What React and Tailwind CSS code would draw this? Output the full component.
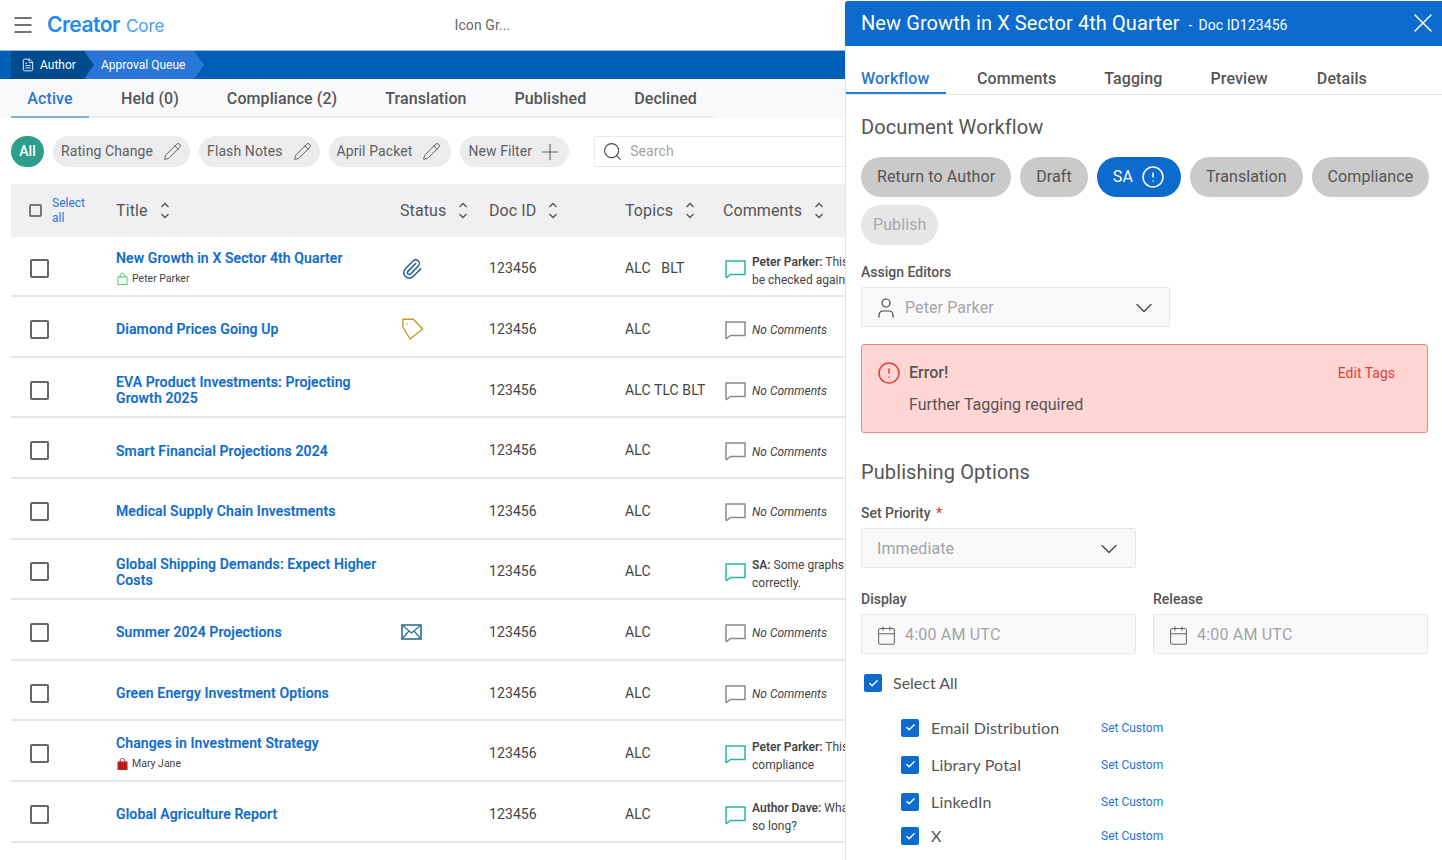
import React from "react";
import { Menu, FileText, Pencil, Plus, Search, Paperclip, X, User, ChevronDown, Calendar, Check, CircleAlert } from "lucide-react";

const Sort = () => (
  <svg width="10" height="17" viewBox="0 0 10 17" fill="none" stroke="#555" strokeWidth="1.3" className="shrink-0">
    <path d="M1.5 5 5 1.5 8.5 5M1.5 12 5 15.5 8.5 12" />
  </svg>
);

const Bubble = ({ on }) => (
  <svg width="21" height="19" viewBox="0 0 21 19" fill="none" stroke={on ? "#2bb5a0" : "#8a8a8a"} strokeWidth="1.5" className="shrink-0">
    <path d="M1 1h19v13.5H5.5L1.6 17.6 1 17z" />
  </svg>
);

const Envelope = () => (
  <svg width="21" height="16" viewBox="0 0 21 16" fill="none" stroke="#2f6f94" strokeWidth="1.6">
    <rect x="1" y="1" width="19" height="14" />
    <path d="M1 1l9.5 8L20 1M1 15l7-8M20 15l-7-8" strokeWidth="1.2" />
  </svg>
);

const PriceTag = () => (
  <svg width="22" height="22" viewBox="0 0 22 22" fill="none" stroke="#c8962b" strokeWidth="1.4" strokeLinejoin="round" className="ml-[1px]">
    <path d="M.9 1.2h10.4L20.7 11 8 21 .9 9z" />
    <circle cx="5" cy="6" r=".6" fill="#c8962b" strokeWidth=".5" />
  </svg>
);

const Bag = ({ locked }) => (
  <svg width="11" height="12" viewBox="0 0 11 12" fill={locked ? "#b91c1c" : "none"} stroke={locked ? "#b91c1c" : "#4ccb63"} strokeWidth="1" className="shrink-0">
    <rect x="1" y="4" width="9" height="7.5" />
    <path d="M3.2 4V2.2C3.2 1 4.2.5 5.5.5S7.8 1 7.8 2.2V4" fill="none" />
  </svg>
);

const BlueCheck = () => (
  <span className="w-[18px] h-[18px] rounded-[2px] bg-[#0c6bcc] flex items-center justify-center shrink-0">
    <Check size={11} color="#fff" strokeWidth={3} />
  </span>
);

const rows = [
  { title: "New Growth in X Sector 4th Quarter", owner: "Peter Parker", icon: "clip", topics: "ALC\u00a0\u00a0 BLT", who: "Peter Parker:", c1: "This", c2: "be checked again" },
  { title: "Diamond Prices Going Up", icon: "tag", topics: "ALC" },
  { title: "EVA Product Investments: Projecting Growth 2025", topics: "ALC TLC BLT" },
  { title: "Smart Financial Projections 2024", topics: "ALC" },
  { title: "Medical Supply Chain Investments", topics: "ALC" },
  { title: "Global Shipping Demands: Expect Higher Costs", topics: "ALC", who: "SA:", c1: "Some graphs", c2: "correctly." },
  { title: "Summer 2024 Projections", icon: "mail", topics: "ALC" },
  { title: "Green Energy Investment Options", topics: "ALC" },
  { title: "Changes in Investment Strategy", owner: "Mary Jane", locked: true, topics: "ALC", who: "Peter Parker:", c1: "This", c2: "compliance" },
  { title: "Global Agriculture Report", topics: "ALC", who: "Author Dave:", c1: "What", c2: "so long?" },
];

const cols = "grid grid-cols-[105px_284px_89px_136px_98px_1fr] items-center";

const Row = ({ r }) => (
  <div className={`${cols} h-[60.6px] pt-[6px] border-b-2 border-[#e6e6e8] text-[14px] text-[#444]`}>
    <span className="ml-[19px] w-[19px] h-[19px] border-2 border-[#666] rounded-[2px]" />
    <div className="pr-[10px]">
      <div className="text-[14px] leading-4 font-medium tracking-[0.12px] text-[#0c6bcc] [-webkit-text-stroke:0.2px_#0c6bcc]">{r.title}</div>
      {r.owner && (
        <div className="flex items-center gap-[4px] mt-[5px] ml-[1px] text-[10.5px] leading-4 text-[#444]">
          <Bag locked={r.locked} />
          {r.owner}
        </div>
      )}
    </div>
    <div className="pl-[1px]">
      {r.icon === "clip" && <Paperclip size={22} color="#1f5a9a" strokeWidth={1.6} />}
      {r.icon === "tag" && <PriceTag />}
      {r.icon === "mail" && <Envelope />}
    </div>
    <div className="tracking-[0.1px]">123456</div>
    <div className="tracking-[0.1px]">{r.topics}</div>
    <div className="flex items-center gap-[6px] pl-[2px] pt-[2px] w-[170px]">
      <Bubble on={!!r.who} />
      {r.who ? (
        <div className="text-[12px] leading-[18px] whitespace-nowrap pt-[3px]">
          <div><b className="font-semibold">{r.who}</b> {r.c1}</div>
          <div>{r.c2}</div>
        </div>
      ) : (
        <div className="text-[12px] italic whitespace-nowrap">No Comments</div>
      )}
    </div>
  </div>
);

const Chip = ({ label, plus, wide }) => (
  <div className={`h-[31px] shrink-0 rounded-full bg-[#ececee] flex items-center gap-[10px] pl-[8px] text-[14px] tracking-[0.1px] text-[#5f5f5f] whitespace-nowrap ${wide ? "pr-[10px]" : "pr-[8px]"}`}>
    {label}
    {plus ? <Plus size={26} strokeWidth={1} className="-ml-[5px] -mr-[2px]" /> : <Pencil size={19} strokeWidth={1.25} />}
  </div>
);

const Pill = ({ label, active, off }) => (
  <div className={`h-10 rounded-full flex items-center gap-2 text-[16px] tracking-[0.1px] ${off ? "px-3" : "px-4"} ${active ? "bg-[#0c6bcc] text-white" : off ? "bg-[#e6e6e8] text-[#a8a8a8]" : "bg-[#cacaca] text-[#555]"}`}>
    {label}
    {active && <CircleAlert size={24} strokeWidth={1.5} />}
  </div>
);

const Label = ({ children }) => <div className="text-[14px] leading-5 font-medium text-[#555]">{children}</div>;

const Time = () => (
  <div className="h-10 pt-[2px] bg-[#f9f9fb] border border-[#e8e8ea] rounded-[2px] flex items-center gap-2 pl-[14px] text-[16px] tracking-[0.2px] text-[#a4a4a4]">
    <Calendar size={21} color="#666" strokeWidth={1.2} />
    4:00 AM UTC
  </div>
);

const Channel = ({ label, h }) => (
  <div className={`flex items-center ${h} pl-[40px]`}>
    <BlueCheck />
    <span className="w-[182px] pl-[12px] text-[16px] tracking-[0.16px] text-[#555] font-['Lato',sans-serif]">{label}</span>
    <span className="text-[12px] text-[#2474d4]">Set Custom</span>
  </div>
);

export default function App() {
  return (
    <div className="w-[1442px] h-[860px] overflow-hidden flex bg-white font-['Roboto',sans-serif]">
      <div className="w-[845px] shrink-0 overflow-hidden">
        <div className="h-[50px] flex items-center">
          <Menu size={24} color="#444" strokeWidth={1.5} className="ml-[11px]" />
          <div className="ml-[12px] flex items-baseline gap-[6px] text-[#1f8af0] font-['Inter',sans-serif]">
            <span className="text-[21px] font-semibold tracking-[-0.5px]">Creator</span>
            <span className="text-[17px] text-[#4a9df2]">Core</span>
          </div>
          <span className="ml-[290px] text-[14px] tracking-[0.1px] text-[#666]">Icon Gr...</span>
        </div>
        <div className="h-[29px] bg-[#005eb4] pl-[11px] flex text-[12px] text-white border-t border-[#9cbcdc]">
          <div className="relative z-10 w-[83px] bg-[#004a8e] flex items-center gap-[5px] pl-[10px] [clip-path:polygon(0_0,73px_0,100%_50%,73px_100%,0_100%)]">
            <FileText size={14} strokeWidth={1.5} />
            Author
          </div>
          <div className="-ml-[9px] w-[119px] bg-[#2a75d8] flex items-center pl-[16px] [clip-path:polygon(0_0,109px_0,100%_50%,109px_100%,0_100%)]">
            Approval Queue
          </div>
        </div>
        <div className="h-[39px] bg-[#f9f9fb] flex text-[16px] tracking-[0.08px] font-medium text-[#555]">
          <div className="ml-[11px] w-[78px] pt-[2px] flex items-center justify-center text-[#2a75d8] border-b-2 border-[#7fb0ec]">Active</div>
          <div className="flex w-[625px] pt-[2px] border-b-2 border-[#ededf0]">
            <div className="flex items-center pl-[32px]">Held (0)</div>
            <div className="flex items-center pl-[48px]">Compliance (2)</div>
            <div className="flex items-center pl-[48px]">Translation</div>
            <div className="flex items-center pl-[48px]">Published</div>
            <div className="flex items-center pl-[48px]">Declined</div>
          </div>
        </div>
        <div className="mt-[18px] pl-[11px] flex items-center gap-[9px]">
          <div className="w-[33px] h-[31px] shrink-0 rounded-full bg-[#2e9e8c] text-white text-[14px] font-medium flex items-center justify-center">All</div>
          <Chip label="Rating Change" />
          <Chip label="Flash Notes" />
          <Chip label="April Packet" wide />
          <Chip label="New Filter" plus />
          <div className="ml-[16px] w-[300px] h-[31px] shrink-0 border border-[#e8e8ea] rounded-[2px] flex items-center gap-[7px] pl-[7px] text-[14px] tracking-[0.1px] text-[#a4a4a4]">
            <Search size={21} color="#444" strokeWidth={1.2} />
            Search
          </div>
        </div>
        <div className="mt-[17px] ml-[11px]">
          <div className={`${cols} h-[52.6px] pt-px bg-[#f0f0f2] text-[16px] tracking-[0.1px] text-[#555]`}>
            <div className="flex items-center gap-[10px] pl-[18px]">
              <span className="w-[13px] h-[13px] border-2 border-[#777] rounded-[2px] shrink-0" />
              <span className="w-[40px] text-[12px] leading-[15px] tracking-normal text-[#2a75d8]">Select all</span>
            </div>
            <div className="flex items-center gap-[12px]">Title <Sort /></div>
            <div className="flex items-center gap-[12px]">Status <Sort /></div>
            <div className="flex items-center gap-[12px]">Doc ID <Sort /></div>
            <div className="flex items-center gap-[12px]">Topics <Sort /></div>
            <div className="flex items-center gap-[12px]">Comments <Sort /></div>
          </div>
          {rows.map((r) => <Row key={r.title} r={r} />)}
        </div>
      </div>

      <div className="w-[597px] shrink-0 border-l border-[#e4e4e6]">
        <div className="-ml-px mt-px h-[45px] pb-[2px] bg-[#0c6bcc] rounded-tl-[3px] text-white flex items-center pl-[16px] pr-[3px]">
          <span className="text-[20px] tracking-[0.09px]">New Growth in X Sector 4th Quarter</span>
          <span className="ml-[9px] text-[14px] mt-[5px]">-</span>
          <span className="ml-[6px] text-[14px] tracking-[0.08px] mt-[5px]">Doc ID123456</span>
          <X size={32} strokeWidth={1.1} className="ml-auto" />
        </div>
        <div className="h-[49px] flex text-[16px] tracking-[0.1px] font-medium text-[#555] border-b border-[#e8e8ea]">
          <div className="w-[100px] pl-[15px] pt-[19px] flex items-center text-[#2a75d8] border-b-2 border-[#2a75d8]">Workflow</div>
          <div className="pl-[31px] pt-[18px] flex items-center">Comments</div>
          <div className="pl-[48px] pt-[18px] flex items-center">Tagging</div>
          <div className="pl-[48px] pt-[18px] flex items-center">Preview</div>
          <div className="pl-[49px] pt-[18px] flex items-center">Details</div>
        </div>
        <div className="pl-[15px] pr-[12px]">
          <div className="mt-[19px] text-[20px] leading-[26px] tracking-[0.1px] text-[#555]">Document Workflow</div>
          <div className="mt-[17px] flex flex-wrap gap-x-[9px] gap-y-[8px]">
            <Pill label="Return to Author" />
            <Pill label="Draft" />
            <Pill label="SA" active />
            <Pill label="Translation" />
            <Pill label="Compliance" />
            <Pill label="Publish" off />
          </div>
          <div className="mt-[17px]"><Label>Assign Editors</Label></div>
          <div className="mt-[5px] w-[309px] h-[40px] pt-[2px] bg-[#f9f9fb] border border-[#e8e8ea] rounded-[2px] flex items-center gap-[7px] pl-[12px] pr-[11px] text-[16px] tracking-[0.1px] text-[#a4a4a4]">
            <User size={24} color="#444" strokeWidth={1.2} />
            Peter Parker
            <ChevronDown size={28} color="#444" strokeWidth={1.1} className="ml-auto" />
          </div>
          <div className="mt-[17px] w-[567px] h-[89px] bg-[#ffd6d4] border border-[#f08582] rounded-[3px] pl-[15px] pr-[32px] pt-[16px]">
            <div className="flex items-center">
              <CircleAlert size={24} color="#e23d3d" strokeWidth={1.5} />
              <span className="ml-[8px] text-[16px] font-medium text-[#555]">Error!</span>
              <span className="ml-auto text-[14px] text-[#e23d3d]">Edit Tags</span>
            </div>
            <div className="mt-[8px] ml-[32px] text-[16px] text-[#555]">Further Tagging required</div>
          </div>
          <div className="mt-[26px] text-[20px] leading-[26px] tracking-[0.1px] text-[#555]">Publishing Options</div>
          <div className="mt-[18px]"><Label>Set Priority <span className="text-[#e23d3d] ml-[2px]">*</span></Label></div>
          <div className="mt-[5px] w-[275px] h-[40px] pt-[2px] bg-[#f9f9fb] border border-[#e8e8ea] rounded-[2px] flex items-center pl-[15px] pr-[12px] text-[16px] tracking-[0.1px] text-[#a4a4a4]">
            Immediate
            <ChevronDown size={28} color="#444" strokeWidth={1.1} className="ml-auto" />
          </div>
          <div className="mt-[21px] grid grid-cols-[275px_275px] gap-x-[17px]">
            <div><Label>Display</Label><div className="mt-[5px]"><Time /></div></div>
            <div><Label>Release</Label><div className="mt-[5px]"><Time /></div></div>
          </div>
          <div className="mt-[18px] flex items-center pl-[3px] h-[22px]">
            <BlueCheck />
            <span className="ml-[11px] text-[16px] text-[#555] font-['Lato',sans-serif]">Select All</span>
          </div>
          <div className="mt-[15px]">
            <Channel label="Email Distribution" h="h-[37px]" />
            <Channel label="Library Potal" h="h-[37px]" />
            <Channel label="LinkedIn" h="h-[37px]" />
            <Channel label="X" h="h-[32px]" />
          </div>
        </div>
      </div>
    </div>
  );
}
